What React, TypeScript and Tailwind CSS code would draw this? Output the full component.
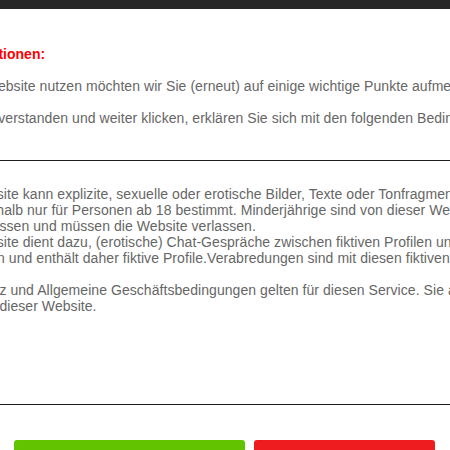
import React from "react";

const termsLines = [
  "Diese Website kann explizite, sexuelle oder erotische Bilder, Texte oder Tonfragmente enthalten",
  "und ist deshalb nur für Personen ab 18 bestimmt. Minderjährige sind von dieser Website",
  "ausgeschlossen und müssen die Website verlassen.",
  "Diese Website dient dazu, (erotische) Chat-Gespräche zwischen fiktiven Profilen und Nutzern zu",
  "ermöglichen und enthält daher fiktive Profile.Verabredungen sind mit diesen fiktiven Profilen nicht möglich.",
  "",
  "Datenschutz und Allgemeine Geschäftsbedingungen gelten für diesen Service. Sie akzeptieren diese mit der",
  "Benutzung dieser Website.",
];

const App: React.FC = () => {
  return (
    <div className="min-h-screen bg-white overflow-hidden font-['Liberation_Sans',Arial,sans-serif] text-[14px] leading-[16px]">
      <div className="h-[9px] bg-[#272727]" />

      <div className="ml-[-124px] w-[760px]">
        <div className="pt-[37px] pb-[34px]">
          <h3 className="pl-[9px] font-bold text-[#ff0000]">Wichtige Informationen:</h3>
          <p className="pl-[6px] mt-4 text-[#666666] whitespace-nowrap tracking-[0.06px]">
            Bevor Sie diese Website nutzen möchten wir Sie (erneut) auf einige wichtige Punkte aufmerksam machen.
          </p>
          <p className="mt-4 text-[#666666] whitespace-nowrap tracking-[0.06px]">
            Wenn Sie damit einverstanden und weiter klicken, erklären Sie sich mit den folgenden Bedingungen einverstanden:
          </p>
        </div>

        <div className="border-t border-[#1c1c1c]" />

        <div className="pl-[52px] pt-[25px] h-[243px] text-[#666666] tracking-[0.06px]">
          {termsLines.map((line, i) => (
            <div key={i} className="h-4 whitespace-nowrap">
              {line}
            </div>
          ))}
        </div>

        <div className="border-t border-[#1c1c1c]" />

        <div className="flex gap-[9px] pl-[138px] pt-[35px] pb-4">
          <button className="w-[231px] h-[44px] rounded-[3px] bg-[#62c400] text-white font-bold">
            Ich bin über 18
          </button>
          <button className="w-[181px] h-[44px] rounded-[3px] bg-[#ee1c1f] text-white font-bold">
            Verlassen
          </button>
        </div>
      </div>
    </div>
  );
};

export default App;
